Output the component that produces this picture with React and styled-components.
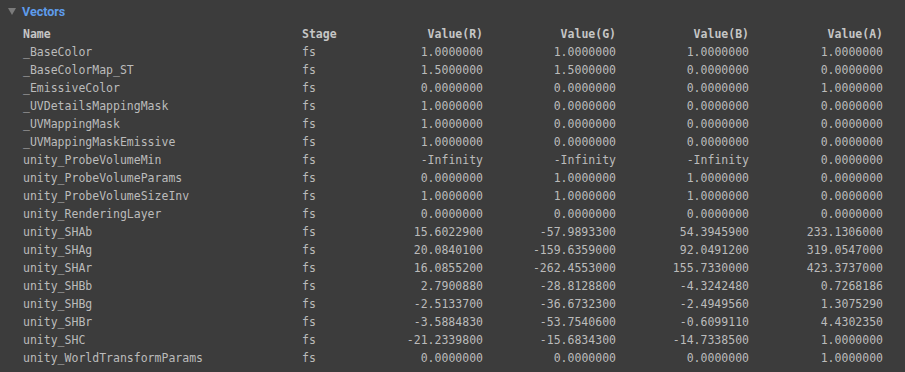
import styled, { createGlobalStyle } from 'styled-components'

const GlobalStyle = createGlobalStyle`
  html, body {
    margin: 0;
    padding: 0;
    background: #3c3c3c;
  }
`

const Panel = styled.div`
  width: 905px;
  height: 372px;
  background: #3c3c3c;
  box-sizing: border-box;
  overflow: hidden;
`

const SectionHeader = styled.div`
  display: flex;
  align-items: center;
  height: 22px;
  padding-left: 8px;
  gap: 6px;
`

const Arrow = styled.span`
  width: 0;
  height: 0;
  border-left: 4.5px solid transparent;
  border-right: 4.5px solid transparent;
  border-top: 7px solid #7b7b7b;
  margin-top: 1px;
`

const Title = styled.span`
  font-family: Roboto, "Noto Sans", sans-serif;
  font-weight: 700;
  font-size: 12.5px;
  color: #5e9cec;
`

const Table = styled.div`
  display: grid;
  grid-template-columns: 279px 60px 121px 133px 133px 134px;
  grid-auto-rows: 18px;
  padding-left: 23px;
  margin-top: 3px;
  font-family: "DejaVu Sans Mono", "Liberation Mono", monospace;
  font-size: 11.5px;
`

const Cell = styled.div`
  line-height: 18px;
  white-space: nowrap;
  text-align: ${(p) => (p.$right ? 'right' : 'left')};
  color: ${(p) => (p.$head ? '#c6c6c6' : '#bbbbbb')};
  font-weight: ${(p) => (p.$head ? 700 : 400)};
`

const headers = ['Name', 'Stage', 'Value(R)', 'Value(G)', 'Value(B)', 'Value(A)']

const rows = [
  ['_BaseColor', 'fs', '1.0000000', '1.0000000', '1.0000000', '1.0000000'],
  ['_BaseColorMap_ST', 'fs', '1.5000000', '1.5000000', '0.0000000', '0.0000000'],
  ['_EmissiveColor', 'fs', '0.0000000', '0.0000000', '0.0000000', '1.0000000'],
  ['_UVDetailsMappingMask', 'fs', '1.0000000', '0.0000000', '0.0000000', '0.0000000'],
  ['_UVMappingMask', 'fs', '1.0000000', '0.0000000', '0.0000000', '0.0000000'],
  ['_UVMappingMaskEmissive', 'fs', '1.0000000', '0.0000000', '0.0000000', '0.0000000'],
  ['unity_ProbeVolumeMin', 'fs', '-Infinity', '-Infinity', '-Infinity', '0.0000000'],
  ['unity_ProbeVolumeParams', 'fs', '0.0000000', '1.0000000', '1.0000000', '0.0000000'],
  ['unity_ProbeVolumeSizeInv', 'fs', '1.0000000', '1.0000000', '1.0000000', '0.0000000'],
  ['unity_RenderingLayer', 'fs', '0.0000000', '0.0000000', '0.0000000', '0.0000000'],
  ['unity_SHAb', 'fs', '15.6022900', '-57.9893300', '54.3945900', '233.1306000'],
  ['unity_SHAg', 'fs', '20.0840100', '-159.6359000', '92.0491200', '319.0547000'],
  ['unity_SHAr', 'fs', '16.0855200', '-262.4553000', '155.7330000', '423.3737000'],
  ['unity_SHBb', 'fs', '2.7900880', '-28.8128800', '-4.3242480', '0.7268186'],
  ['unity_SHBg', 'fs', '-2.5133700', '-36.6732300', '-2.4949560', '1.3075290'],
  ['unity_SHBr', 'fs', '-3.5884830', '-53.7540600', '-0.6099110', '4.4302350'],
  ['unity_SHC', 'fs', '-21.2339800', '-15.6834300', '-14.7338500', '1.0000000'],
  ['unity_WorldTransformParams', 'fs', '0.0000000', '0.0000000', '0.0000000', '1.0000000'],
]

export default function App() {
  return (
    <>
      <GlobalStyle />
      <Panel>
        <SectionHeader>
          <Arrow />
          <Title>Vectors</Title>
        </SectionHeader>
        <Table>
          {headers.map((h, i) => (
            <Cell key={h} $head $right={i > 1}>{h}</Cell>
          ))}
          {rows.map((r) =>
            r.map((v, i) => (
              <Cell key={r[0] + i} $right={i > 1}>{v}</Cell>
            ))
          )}
        </Table>
      </Panel>
    </>
  )
}
